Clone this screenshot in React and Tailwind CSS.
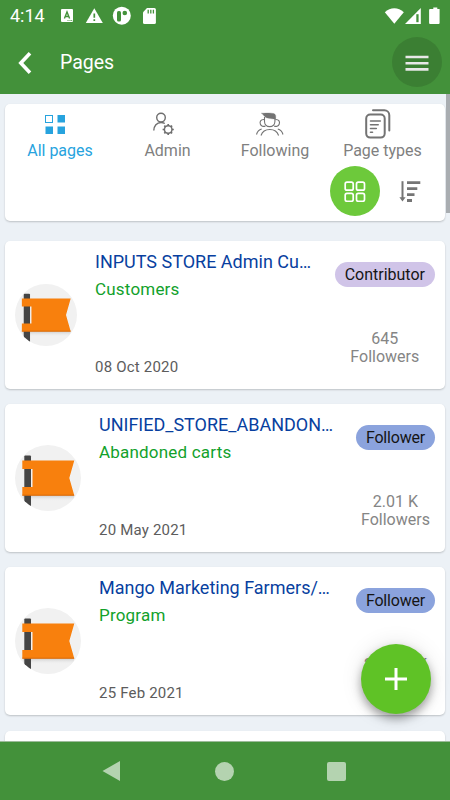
import React from "react";

const pages = [
  {
    id: 1,
    title: "INPUTS STORE Admin Cu…",
    category: "Customers",
    date: "08 Oct 2020",
    role: "Contributor",
    followers: "645",
  },
  {
    id: 2,
    title: "UNIFIED_STORE_ABANDON…",
    category: "Abandoned carts",
    date: "20 May 2021",
    role: "Follower",
    followers: "2.01 K",
  },
  {
    id: 3,
    title: "Mango Marketing Farmers/…",
    category: "Program",
    date: "25 Feb 2021",
    role: "Follower",
    followers: "201.14 K",
  },
];

const StatusBar = () => (
  <div className="flex h-[30px] items-center pt-[1px] text-white">
    <span className="w-[50px] pl-[10px] text-[18px] leading-5">4:14</span>
    <svg className="ml-[10px] h-5 w-[100px]" viewBox="0 0 100 20" fill="#fff">
      <path d="M2 3h10a1 1 0 011 1v11a1 1 0 01-1 1H2a1 1 0 01-1-1V4a1 1 0 011-1z" />
      <path d="M4.4 12.5L7 6l2.6 6.5M5.4 10.5h3.2" fill="none" stroke="#43913a" strokeWidth="1.4" />
      <path d="M7.5 14.5h1M9.5 14.5h1M11.2 14.5h1" stroke="#43913a" strokeWidth="0.9" />
      <path d="M34.3 2.3L42.8 17H25.8z" />
      <path d="M34.3 7.5v4.3M34.3 13.2v1.8" stroke="#43913a" strokeWidth="1.7" />
      <circle cx="61.8" cy="9.7" r="9" />
      <rect x="57" y="5" width="4" height="10.5" rx="1.6" fill="#43913a" />
      <circle cx="64.8" cy="7" r="2.3" fill="#43913a" />
      <path d="M87 2h7.3a1.6 1.6 0 011.6 1.6v12.8a1.6 1.6 0 01-1.6 1.6H84.6a1.6 1.6 0 01-1.6-1.6V6.3z" />
      <path d="M88.2 3.8v3.6M90.8 3.8v3.6M93.4 3.8v3.6" stroke="#43913a" strokeWidth="1.3" />
    </svg>
    <svg className="ml-auto h-5 w-[66px]" viewBox="0 0 66 20" fill="#fff">
      <path d="M.8 6.3C6.3.9 14.3.9 19.8 6.3L10.3 17.8z" />
      <path d="M36.8 2v16H21z" />
      <path d="M32.3 8.2h2.3v8h-2.3z" fill="#43913a" />
      <path d="M49.3 1.5h4v1.6h2.3v14a1 1 0 01-1 1h-8.5a1 1 0 01-1-1v-13a1 1 0 011-1h3.2z" />
    </svg>
  </div>
);

const AllPagesIcon = () => (
  <svg className="mr-[10px] h-[30px] w-[30px]" viewBox="0 0 30 30" fill="#27a3de">
    <rect x="5.5" y="6.5" width="7" height="7" fill="none" stroke="#27a3de" />
    <rect x="17.5" y="6" width="7.5" height="7.5" />
    <rect x="5.5" y="17.5" width="7.5" height="7.5" />
    <rect x="17.5" y="17.5" width="7.5" height="7.5" />
  </svg>
);

const AdminIcon = () => (
  <svg className="mr-[10px] h-[30px] w-[30px]" viewBox="0 0 30 30" fill="none" stroke="#6f6f6f" strokeWidth="1.4">
    <circle cx="13" cy="8.6" r="4.3" />
    <path d="M5.8 21.5c.1-4.600 3-8 7.200-8 1.400 0 2.700.4 3.800 1" />
    <circle cx="20.2" cy="20.5" r="3.8" strokeWidth="1.5" />
    <path d="M20.2 16.8v-1.900M20.2 24.2v1.900M16.500 20.500h-1.900M23.900 20.500h1.900M17.600 17.900l-1.300-1.300M22.800 17.900l1.300-1.300M17.600 23.100l-1.300 1.300M22.800 23.100l1.300 1.300" strokeWidth="1.7" />
  </svg>
);

const FollowingIcon = () => (
  <svg className="mr-[10px] h-[30px] w-[30px]" viewBox="0 0 30 30" fill="none" stroke="#737373" strokeWidth="1.1">
    <path d="M9.5 8v4.6c0 3 2.300 5 5.200 5s5.200-2 5.200-5V8.500" />
    <path d="M6.3 4.2c4 .2 8.500-.8 12.500.4 2 .7 2.400 2.600 1.700 5.400-4.700-.3-9.200-.6-10.800-2.500-1.200-1-1.700-2.500-3.400-3.300z" fill="#737373" strokeWidth=".3" />
    <path d="M9.3 10.6c-3.800-.3-4.800 2.300-3.900 4.600.8 2 3.100 2.800 5 1.700M20.300 10.600c3.800-.3 4.800 2.300 3.900 4.600-.8 2-3.100 2.800-5 1.700" />
    <path d="M6 26.500c1.300-4 4.700-6 8.800-6s7.500 2 8.800 6M1.500 25.500c.8-3 2.600-4.800 5.200-5.500M28 25.500c-.8-3-2.600-4.800-5.200-5.500" />
  </svg>
);

const PageTypesIcon = () => (
  <svg className="mr-[10px] h-[30px] w-[30px]" viewBox="0 0 30 30" fill="none" stroke="#737373" strokeWidth="2" strokeLinecap="round">
    <rect x="3.2" y="5.6" width="18.500" height="23" rx="4" />
    <path d="M10 1.2h11.300a5 5 0 015 5v15.300" />
    <path d="M7.5 12h9.800M7.500 15.700h7.700M7.500 19.500h5.800M7.500 23.200h2" strokeWidth="1.6" />
  </svg>
);

const tabs = [
  { label: "All pages", icon: <AllPagesIcon />, active: true },
  { label: "Admin", icon: <AdminIcon /> },
  { label: "Following", icon: <FollowingIcon /> },
  { label: "Page types", icon: <PageTypesIcon /> },
];

const Filters = () => (
  <div className="h-[117.5px] shrink-0 rounded-[5px] bg-white pt-[5px] shadow-[0_1px_2px_rgba(0,0,0,0.2)]">
    <div className="grid grid-cols-[110px_105px_110px_105px]">
      {tabs.map((tab) => (
        <div
          key={tab.label}
          className={`flex flex-col items-center text-base leading-5 ${
            tab.active ? "text-[#27a3de]" : "text-[#808080]"
          }`}
        >
          {tab.icon}
          <span className="mt-[2px] whitespace-nowrap">{tab.label}</span>
        </div>
      ))}
    </div>
    <div className="mt-[5px] flex items-center justify-end gap-[18px] pr-[23px]">
      <div className="flex h-[50px] w-[50px] items-center justify-center rounded-full bg-[#6dc93b]">
        <svg className="h-[22px] w-[22px]" viewBox="0 0 22 22" fill="none" stroke="#fff" strokeWidth="1.7">
          <rect x="1.2" y="2.2" width="8" height="8" rx="1.8" />
          <rect x="12.5" y="2.2" width="8" height="8" rx="1.8" />
          <rect x="1.2" y="13.3" width="8" height="8" rx="1.8" />
          <rect x="12.5" y="13.3" width="8" height="8" rx="1.8" />
        </svg>
      </div>
      <svg className="h-[24px] w-[24px]" viewBox="0 0 24 24" fill="none" stroke="#757575">
        <path d="M4.5 2.200v17" strokeWidth="2" />
        <path d="M1.400 18.200h6.200l-3.100 4.200z" fill="#757575" stroke="none" />
        <path d="M9 3.700h13.300M9 9.700h10.300M9 15.600h7.500M9 21.500h5" strokeWidth="2.8" />
      </svg>
    </div>
  </div>
);

const FlagAvatar = ({ small }) => (
  <svg className={small ? "h-[62px] w-[62px] shrink-0" : "h-[66px] w-[66px] shrink-0"} viewBox="0 0 66 66">
    <defs>
      <clipPath id="avatarClip">
        <circle cx="33" cy="33" r="33" />
      </clipPath>
      <linearGradient id="flagShadow" x1="0" y1="0" x2="0" y2="1">
        <stop offset="0" stopColor="#c8c8c8" />
        <stop offset="1" stopColor="#efefef" stopOpacity="0" />
      </linearGradient>
    </defs>
    <g clipPath="url(#avatarClip)">
      <rect width="66" height="66" fill="#f1f1f1" />
      <path d="M8 50h51v6H8z" fill="url(#flagShadow)" />
      <rect x="9.3" y="10.5" width="6.7" height="56" rx="1" fill="#454545" />
      <path d="M7.3 15.5h52l-5 17.5 5 17.5h-52v-8.500h10.200V24H7.300z" fill="#f8800d" />
      <path d="M7.3 50.2h51.9" stroke="#d96b0b" strokeWidth="1" />
    </g>
  </svg>
);

const PageCard = ({ page }) => {
  const contributor = page.role === "Contributor";
  return (
    <div className="flex h-[148px] shrink-0 items-center rounded-[5px] bg-white px-[10px] shadow-[0_1px_2px_rgba(0,0,0,0.2)]">
      <FlagAvatar small={contributor} />
      <div className="ml-[18px] flex h-full min-w-0 flex-1 flex-col pt-[9px] whitespace-nowrap">
        <span className="text-[18px] leading-6 text-[#083f9f]">{page.title}</span>
        <span className="mt-[3px] text-[17px] leading-6 tracking-[0.2px] text-[#12a12b]">{page.category}</span>
        <span className="mt-[56px] text-[15px] leading-5 tracking-[0.2px] text-[#5c5c5c]">{page.date}</span>
      </div>
      <div className="flex h-full flex-col items-center pt-[21px] text-base whitespace-nowrap">
        <span
          className={`rounded-full px-[10px] leading-[25px] text-[#151515] ${
            contributor ? "bg-[#d0c4e8]" : "bg-[#8ba3dd] tracking-[-0.2px]"
          }`}
        >
          {page.role}
        </span>
        <div className="mt-[43px] text-center leading-[18px] text-[#858585]">
          <div>{page.followers}</div>
          <div>Followers</div>
        </div>
      </div>
    </div>
  );
};

const App = () => {
  return (
    <div className="relative flex h-[800px] w-[450px] flex-col overflow-hidden bg-[#ecf1f6] font-[Roboto,sans-serif]">
      <header className="h-[93.5px] shrink-0 bg-[#43913a]">
        <StatusBar />
        <div className="flex h-16 items-center pr-[8px] pl-[16px] text-white">
          <svg className="h-6 w-[18px]" viewBox="0 0 18 24" fill="none" stroke="#fff" strokeWidth="3.6">
            <path d="M14 3.300L4.800 13l9.200 9.700" />
          </svg>
          <h1 className="ml-[26px] pt-[1px] text-[19.5px]">Pages</h1>
          <div className="ml-auto flex h-[50px] w-[50px] items-center justify-center rounded-full bg-[#3b7f33]">
            <svg className="h-[18px] w-[24px]" viewBox="0 0 24 18" stroke="#e8e8e8" strokeWidth="2.6">
              <path d="M.5 4h23M.5 10.200h23M.5 16.400h23" />
            </svg>
          </div>
        </div>
      </header>

      <main className="flex min-h-0 flex-1 flex-col overflow-hidden px-[5px] pt-[10px]">
        <Filters />
        <div className="mt-[20px] flex flex-col gap-[15.2px]">
          {pages.map((page) => (
            <PageCard key={page.id} page={page} />
          ))}
          <div className="h-[148px] shrink-0 rounded-[5px] bg-white shadow-[0_1px_2px_rgba(0,0,0,0.2)]" />
        </div>
      </main>

      <nav className="flex h-[59px] shrink-0 items-center justify-center gap-[93px] border-t border-[#9dbb9a] bg-[#43913a] pr-[2px]">
        <svg className="h-5 w-5" viewBox="0 0 20 20" fill="#b4d3b0">
          <path d="M18 0v20L.500 10z" />
        </svg>
        <span className="h-[19px] w-[19px] rounded-full bg-[#b4d3b0]" />
        <span className="h-[19px] w-[19px] rounded-[2px] bg-[#b4d3b0]" />
      </nav>

      {/* Scroll indicator */}
      <div className="absolute top-[94px] right-0 h-[119px] w-[4px] bg-[#a9adb1]" />

      {/* Floating add button */}
      <button className="absolute right-[19px] bottom-[86px] flex h-[70px] w-[70px] items-center justify-center rounded-full bg-[#5fc226] shadow-[0_5px_10px_rgba(0,0,0,0.35),0_0_22px_rgba(0,0,0,0.1)]">
        <svg className="h-[22px] w-[22px]" viewBox="0 0 22 22" stroke="#fff" strokeWidth="3">
          <path d="M11 0v22M0 11h22" />
        </svg>
      </button>
    </div>
  );
};

export default App;
